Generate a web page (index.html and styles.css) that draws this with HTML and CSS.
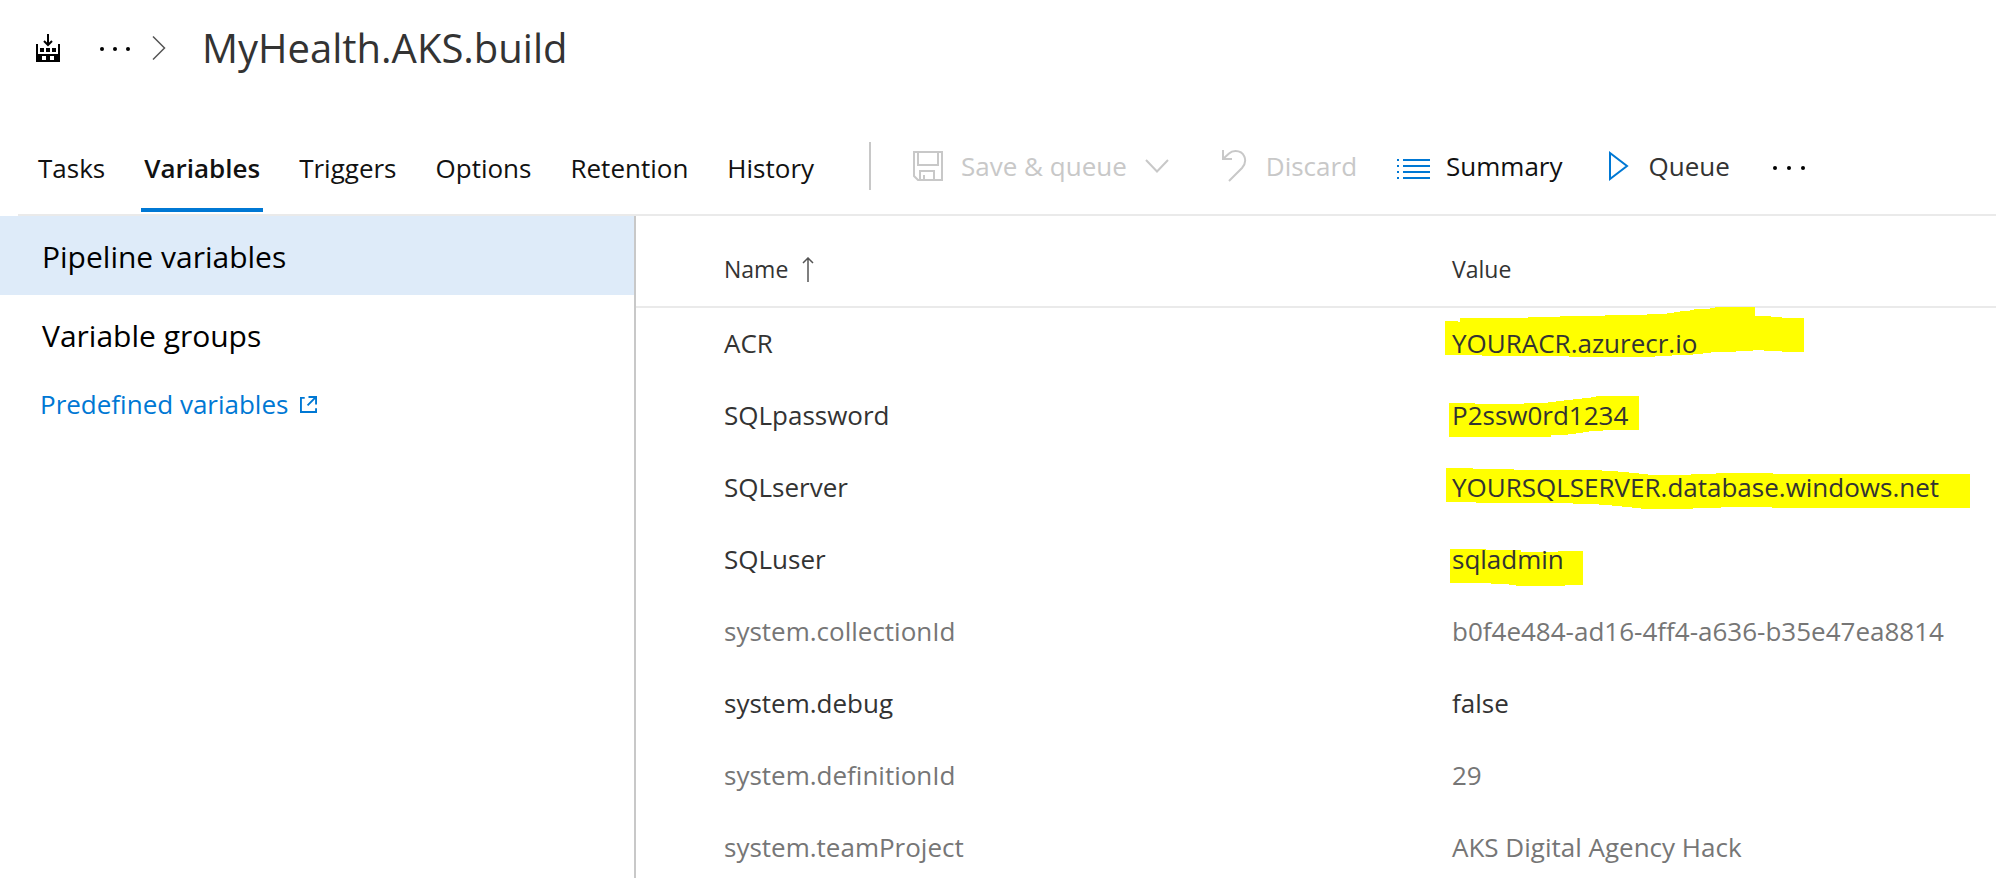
FILE: index.html
```html
<!DOCTYPE html>
<html lang="en">
<head>
<meta charset="utf-8">
<title>MyHealth.AKS.build</title>
<link rel="stylesheet" href="styles.css">
</head>
<body>
<header class="crumbs">
  <svg class="build-icon" width="24" height="28" viewBox="0 0 24 28" aria-hidden="true">
    <path d="M12 0v11M8 7l4 4 4-4" fill="none" stroke="#000" stroke-width="2"/>
    <path fill="#000" fill-rule="evenodd" d="M0 10h2v10h20V10h2v18H0zM6 22v4h4v-4zM14 22v4h4v-4z"/>
    <path fill="#000" d="M4 14h4v4H4zM10 14h4v4h-4zM16 14h4v4h-4z"/>
  </svg>
  <button class="dots-button" type="button" aria-label="More breadcrumbs"><svg width="30" height="6" viewBox="0 -2 30 6"><circle cx="2" cy="2" r="2"/><circle cx="15" cy="2" r="2"/><circle cx="28" cy="2" r="2"/></svg></button>
  <svg class="crumb-arrow" width="14" height="24" viewBox="0 0 14 24" aria-hidden="true"><path d="M1 .5 12.500 12 1 23.500" fill="none" stroke="#555" stroke-width="1.500"/></svg>
  <h1 class="title">MyHealth.AKS.build</h1>
</header>
<div class="bar">
  <nav class="tabs">
    <a class="tab" href="#tasks">Tasks</a>
    <a class="tab tab-active" href="#variables">Variables</a>
    <a class="tab" href="#triggers">Triggers</a>
    <a class="tab" href="#options">Options</a>
    <a class="tab" href="#retention">Retention</a>
    <a class="tab" href="#history">History</a>
  </nav>
  <div class="commands">
    <button class="command save" type="button" disabled>
      <svg width="30" height="30" viewBox="0 0 30 30" fill="none" stroke="currentColor" stroke-width="2"><path d="M1 1h28v28H5l-4-4zM5 1v13h20V1M7 29v-9h14v9M11 29v-5"/></svg>
      <span>Save &amp; queue</span>
      <svg width="24" height="14" viewBox="0 0 24 14" fill="none" stroke="currentColor" stroke-width="2"><path d="m1 1 11 11.500L23 1"/></svg>
    </button>
    <button class="command discard" type="button" disabled>
      <svg width="26" height="34" viewBox="0 0 26 34" fill="none" stroke="currentColor" stroke-width="2"><path d="M2 1v9h9M2 10 8 4.500C10 2.500 12 2 14.500 2 23 2 27.500 11.500 21 19L8 32"/></svg>
      <span>Discard</span>
    </button>
    <button class="command summary" type="button">
      <svg class="blue" width="33" height="26" viewBox="0 -5 33 26"><path d="M0 1h2v2H0zM0 7h2v2H0zM0 13h2v2H0zM0 19h2v2H0zM6 1h27v2H6zM6 7h27v2H6zM6 13h27v2H6zM6 19h27v2H6z"/></svg>
      <span>Summary</span>
    </button>
    <button class="command queue" type="button">
      <svg width="20" height="30" viewBox="0 0 20 30"><path d="M1 2v26l17-13z" fill="none" stroke="#0078d4" stroke-width="2"/></svg>
      <span>Queue</span>
    </button>
    <button class="dots-button more" type="button" aria-label="More actions"><svg width="33" height="8" viewBox="0 -4 33 8"><circle cx="2" cy="2" r="2"/><circle cx="16" cy="2" r="2"/><circle cx="30" cy="2" r="2"/></svg></button>
  </div>
</div>
<div class="content">
  <aside class="side">
    <a class="side-item side-active" href="#pipeline">Pipeline variables</a>
    <a class="side-item" href="#groups">Variable groups</a>
    <a class="side-link" href="#predefined">Predefined variables
      <svg width="17" height="17" viewBox="0 0 18 18" fill="none" stroke="currentColor" stroke-width="2"><path d="M5 2H1v15h16v-4M9 1h8v8M17 1 8 10"/></svg></a>
  </aside>
  <main class="main">
    <table class="vars">
      <thead>
        <tr><th class="name" scope="col">Name <svg class="sort" width="12" height="25" viewBox="0 0 12 25" fill="none" stroke="#555" stroke-width="1.500"><path d="M6 25V1M1 6l5-5 5 5"/></svg></th><th scope="col">Value</th></tr>
      </thead>
      <tbody>
        <tr><td>ACR</td><td><span class="marked"><svg class="mark" width="359" height="50" viewBox="0 0 359 50"><path d="M0 14h13v1h2v-4h68v-1h32v-1h45v-1h42v-1h20v-1h7v-1h6v-1h10v-1h4v-1h16V1h5V0h40v9h16v1h11v1h22v34h-22v-1h-18v-1h-11v1h-17v1h-25v1h-8v1h-10v1h-21v1h-17v1h-86v-1H37v-1H0z"/></svg><span class="value">YOURACR.azurecr.io</span></span></td></tr>
        <tr><td>SQLpassword</td><td><span class="marked"><svg class="mark mark-password" width="190" height="41" viewBox="0 0 190 41"><path d="M0 7h26v1h49V7h24V6h8V5h8V4h9V3h9V2h9V1h5V0h43v34h-36v1h-14v1h-6v1h-7v1h-8v1h-17v2H0z"/></svg><span class="value">P2ssw0rd1234</span></span></td></tr>
        <tr><td>SQLserver</td><td><span class="marked"><svg class="mark mark-server" width="524" height="41" viewBox="0 0 524 41"><path d="M0 0h27v1h41v1h88v1h16v1h11v1h10v1h9v1h43V6h25V5h57v1h197v34H326v-1h-51v1h-28v1h-52v-1h-9v-1h-10v-1h-10v-1h-13v-1h-26v-1H30v-1H0z"/></svg><span class="value">YOURSQLSERVER.database.windows.net</span></span></td></tr>
        <tr><td>SQLuser</td><td><span class="marked"><svg class="mark mark-user" width="133" height="37" viewBox="0 0 133 37"><path d="M0 0h36v1h35v2h37V2h25v34h-18v1H66v-1h-7v-1H41v-1H0z"/></svg><span class="value">sqladmin</span></span></td></tr>
        <tr class="muted"><td>system.collectionId</td><td>b0f4e484-ad16-4ff4-a636-b35e47ea8814</td></tr>
        <tr><td>system.debug</td><td>false</td></tr>
        <tr class="muted"><td>system.definitionId</td><td>29</td></tr>
        <tr class="muted"><td>system.teamProject</td><td>AKS Digital Agency Hack</td></tr>
      </tbody>
    </table>
  </main>
</div>
</body>
</html>
```
FILE: styles.css
```css
* { box-sizing: border-box; }
body {
  margin: 0;
  min-height: 100vh;
  display: flex;
  flex-direction: column;
  background: #fff;
  color: #333;
  font-family: "Open Sans", "Noto Sans", sans-serif;
  font-size: 26px;
  line-height: 36px;
}
a { color: inherit; text-decoration: none; }
button { font: inherit; color: inherit; background: none; border: 0; padding: 0; }
svg { display: block; flex: none; }
.crumbs { display: flex; align-items: center; height: 98px; padding: 0 0 2px 36px; }
.dots-button { margin-left: 40px; color: #000; }
.crumb-arrow { margin-left: 22px; }
.title { margin: 0 0 0 36px; font-size: 40px; line-height: 56px; font-weight: 400; }
.bar {
  display: flex;
  align-items: center;
  height: 118px;
  margin-left: 18px;
  border-bottom: 2px solid #eaeaea;
}
.tabs { display: flex; align-self: stretch; gap: 33px; padding: 0 52px 0 17px; color: #111; }
.tab { display: flex; align-items: center; margin-bottom: 2px; padding: 52px 3px 22px; border-bottom: 4px solid transparent; }
.tab-active { font-weight: 600; border-color: #0078d4; }
.commands { display: flex; align-items: center; height: 48px; margin-top: 20px; padding-left: 42px; border-left: 2px solid #c8c8c8; }
.command { display: flex; align-items: center; white-space: nowrap; }
.command:disabled { color: #c8c8c8; }
.save { gap: 18px; }
.discard { gap: 19px; margin-left: 52px; }
.summary { gap: 16px; margin-left: 40px; color: #111; }
.queue { gap: 20px; margin-left: 46px; }
.more { margin-left: 43px; }
.blue { fill: #0078d4; }
.content { display: flex; flex: 1; }
.side { width: 636px; flex: none; border-right: 2px solid #c8c8c8; color: #000; }
.side-item { display: block; padding: 21px 42px 18px; font-size: 30px; line-height: 40px; }
.side-active { background: #deebf9; }
.side-link { display: flex; align-items: center; gap: 12px; padding: 12px 40px; color: #0078d4; }
.main { flex: 1; min-width: 0; }
.vars { width: 100%; border-spacing: 0; table-layout: fixed; }
.vars th { height: 92px; padding: 16px 0 0; border-bottom: 2px solid #eaeaea; font-size: 23px; font-weight: 400; text-align: left; }
.vars td { height: 72px; padding: 0 0 2px; white-space: nowrap; }
.vars th:first-child, .vars td:first-child { padding-left: 88px; }
.name { width: 816px; }
.sort { display: inline-block; vertical-align: -4px; margin-left: 8px; }
.muted { color: #767676; }
.marked { position: relative; display: inline-block; }
.mark { position: absolute; left: -7px; top: -18px; fill: #ff0; }
.mark-password { left: -3px; top: -1px; }
.mark-server { left: -6px; top: -1px; }
.mark-user { left: -2px; top: 8px; }
.value { position: relative; }
```
